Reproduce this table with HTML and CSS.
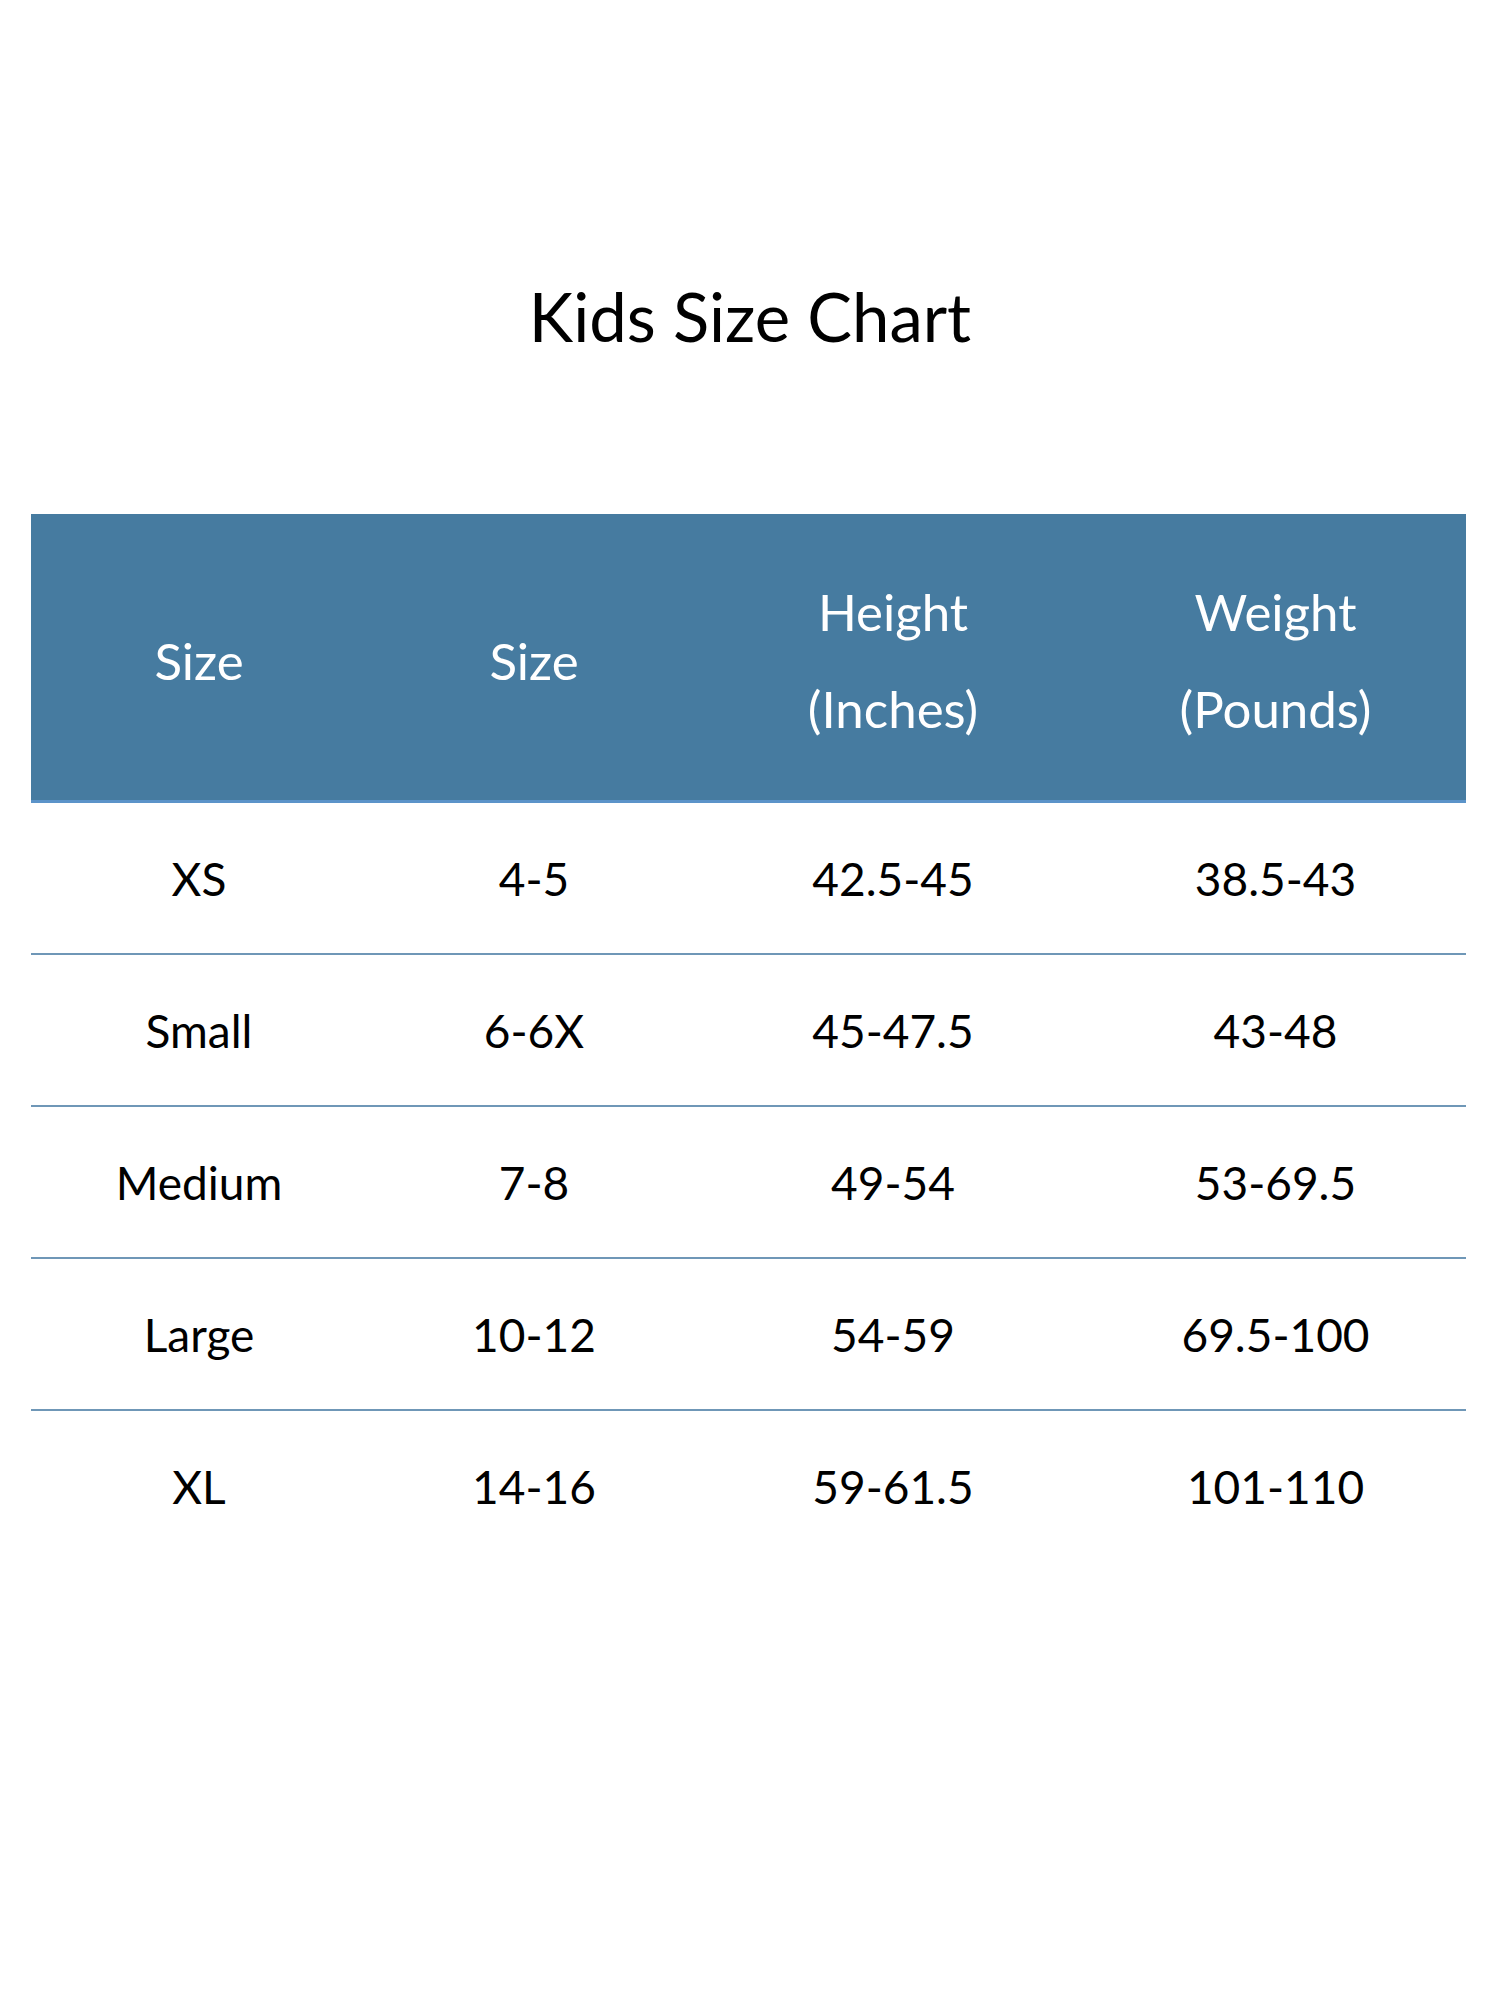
FILE: index.html
```html
<!DOCTYPE html>
<html lang="en">
<head>
<meta charset="utf-8">
<title>Kids Size Chart</title>
<link rel="stylesheet" href="styles.css">
</head>
<body>
<main class="page">
  <h1 class="title">Kids Size Chart</h1>
  <div class="chart">
    <div class="row head">
      <div class="cell">Size</div>
      <div class="cell">Size</div>
      <div class="cell">Height<br>(Inches)</div>
      <div class="cell">Weight<br>(Pounds)</div>
    </div>
    <div class="row">
      <div class="cell">XS</div>
      <div class="cell">4-5</div>
      <div class="cell">42.5-45</div>
      <div class="cell">38.5-43</div>
    </div>
    <div class="row">
      <div class="cell">Small</div>
      <div class="cell">6-6X</div>
      <div class="cell">45-47.5</div>
      <div class="cell">43-48</div>
    </div>
    <div class="row">
      <div class="cell">Medium</div>
      <div class="cell">7-8</div>
      <div class="cell">49-54</div>
      <div class="cell">53-69.5</div>
    </div>
    <div class="row">
      <div class="cell">Large</div>
      <div class="cell">10-12</div>
      <div class="cell">54-59</div>
      <div class="cell">69.5-100</div>
    </div>
    <div class="row last">
      <div class="cell">XL</div>
      <div class="cell">14-16</div>
      <div class="cell">59-61.5</div>
      <div class="cell">101-110</div>
    </div>
  </div>
</main>
</body>
</html>
```

FILE: styles.css
```css
html, body {
  margin: 0;
  padding: 0;
  background: #ffffff;
}

.page {
  width: 1500px;
  height: 2000px;
  font-family: Lato, "Open Sans", "Liberation Sans", sans-serif;
  color: #000000;
}

.title {
  margin: 0;
  padding-top: 266px;
  height: 104px;
  line-height: 100px;
  text-align: center;
  font-weight: 400;
  font-size: 67px;
}

.chart {
  margin: 144px 34px 0 31px;
}

.row {
  display: grid;
  grid-template-columns: 336px 334px 384px 381px;
  height: 150px;
  border-bottom: 2px solid #6f97b7;
  align-items: center;
}

.row.last {
  border-bottom: none;
}

.row.head {
  height: 286px;
  background: #467ba0;
  border-bottom: 3px solid #5b93c9;
  color: #ffffff;
  line-height: 97px;
}

.row.head .cell {
  font-size: 51px;
  padding-top: 6px;
}

.cell {
  text-align: center;
  font-size: 46px;
}
```
